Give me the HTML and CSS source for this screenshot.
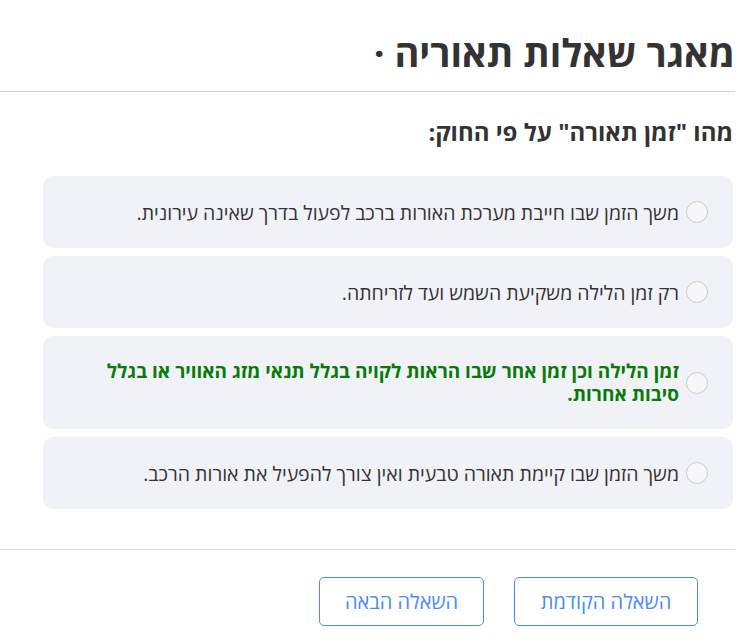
FILE: index.html
```html
<!DOCTYPE html>
<html lang="he" dir="rtl">
<head>
<meta charset="utf-8">
<title>מאגר שאלות תאוריה</title>
<link rel="stylesheet" href="styles.css">
</head>
<body>
<div class="page">
  <header class="header">
    <h1 class="title">מאגר שאלות תאוריה ·</h1>
  </header>
  <main class="content">
    <h2 class="question">מהו "זמן תאורה" על פי החוק:</h2>
    <ul class="answers">
      <li class="answer"><span class="radio"></span><span class="answer-text">משך הזמן שבו חייבת מערכת האורות ברכב לפעול בדרך שאינה עירונית.</span></li>
      <li class="answer"><span class="radio"></span><span class="answer-text">רק זמן הלילה משקיעת השמש ועד לזריחתה.</span></li>
      <li class="answer"><span class="radio"></span><span class="answer-text correct">זמן הלילה וכן זמן אחר שבו הראות לקויה בגלל תנאי מזג האוויר או בגלל סיבות אחרות.</span></li>
      <li class="answer"><span class="radio"></span><span class="answer-text">משך הזמן שבו קיימת תאורה טבעית ואין צורך להפעיל את אורות הרכב.</span></li>
    </ul>
  </main>
  <footer class="footer">
    <button class="nav-btn btn-prev">השאלה הקודמת</button>
    <button class="nav-btn btn-next">השאלה הבאה</button>
  </footer>
</div>
</body>
</html>
```
FILE: styles.css
```css
html, body {
  margin: 0;
  padding: 0;
  background: #ffffff;
}
body {
  font-family: "Open Sans", "Noto Sans", sans-serif;
  color: #333333;
}
.page {
  width: 735px;
  margin: 0 auto 0 0;
}
.header {
  border-bottom: 1px solid #cfcfcf;
  height: 92px;
  box-sizing: border-box;
  padding-top: 28px;
}
.title {
  margin: 0;
  font-size: 38px;
  line-height: 48px;
  font-weight: 700;
  color: #333333;
}
.content {
  padding: 23px 2px 40px 43px;
  border-bottom: 1px solid #dddddd;
}
.question {
  margin: 0 0 27px 0;
  font-size: 24px;
  line-height: 34px;
  font-weight: 700;
  color: #333333;
}
.answers {
  list-style: none;
  margin: 0;
  padding: 0;
  display: flex;
  flex-direction: column;
  gap: 8px;
}
.answer {
  display: flex;
  align-items: center;
  gap: 7px;
  background: #f1f2f8;
  border-radius: 10px;
  padding: 24px 25px 24px 20px;
  min-height: 24px;
}
.radio {
  flex: 0 0 auto;
  width: 20px;
  height: 20px;
  border: 1px solid #cccccc;
  border-radius: 50%;
  background: #f7f7fa;
}
.answer-text {
  font-size: 19.5px;
  line-height: 23px;
  color: #333333;
}
.answer-text.correct {
  font-size: 19px;
  line-height: 22.5px;
  color: #087a08;
  font-weight: 700;
}
.footer {
  display: flex;
  gap: 30px;
  padding: 27px 37px 16px 0;
}
.nav-btn {
  font-family: "Open Sans", "Noto Sans", sans-serif;
  font-size: 20px;
  color: #4a8cf2;
  background: #ffffff;
  border: 1px solid #4a8cf2;
  border-radius: 5px;
  height: 49px;
  box-sizing: border-box;
}
.btn-prev {
  width: 184px;
}
.btn-next {
  width: 165px;
}
```
